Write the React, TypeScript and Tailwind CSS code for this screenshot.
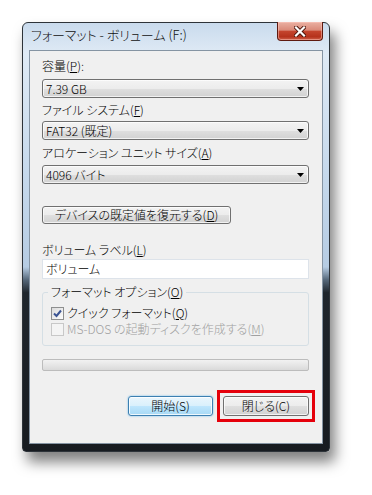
const jp = "font-['Noto_Sans_CJK_JP',sans-serif] font-light [font-feature-settings:'palt']"

function Select({ value }: { value: string }) {
  return (
    <div className="flex h-[19px] items-center justify-between rounded-[3px] border border-[#707070] bg-[linear-gradient(to_bottom,#f3f3f3_0%,#ececec_50%,#dfdfdf_51%,#d2d2d2_100%)] pl-[3px] pr-[4px] text-[12px] leading-none text-black shadow-[inset_0_0_0_1px_rgba(255,255,255,0.7)]">
      <span>{value}</span>
      <svg width="7" height="4" viewBox="0 0 7 4">
        <path d="M0 0h7L3.5 4z" fill="#000" />
      </svg>
    </div>
  )
}

function Label({ text, k, h }: { text: string; k: string; h: string }) {
  return (
    <div className={`flex items-center text-[12px] leading-none text-black ${h}`}>
      {text}(<u>{k}</u>)
    </div>
  )
}

export default function App() {
  return (
    <div className={`h-[495px] w-[372px] bg-white pl-[22px] pt-[22px] ${jp}`}>
      {/* window */}
      <div className="flex h-[430px] w-[308px] flex-col rounded-t-[6px] rounded-b-[4px] border border-[#2d3339] bg-[linear-gradient(to_bottom,#c9dbed_0%,#dfeaf5_7%,#c6d9ec_35%,#b6cce3_57%,#56687a_60%,#1f262d_63%,#171b20_100%)] px-[6px] pb-[7px] shadow-[5px_10px_14px_rgba(0,0,0,0.5)]">
        {/* title bar */}
        <div className="flex h-[27px] items-start justify-between">
          <span className="pl-[2px] pt-[4px] text-[13px] leading-[16px] text-[#111]">
            フォーマット - ボリューム (F:)
          </span>
          <div className="-mt-[1px] flex h-[19px] w-[46px] items-center justify-center rounded-b-[4px] border border-t-0 border-[#5e1a10] bg-[linear-gradient(to_bottom,#eab0a2_0%,#da8a79_45%,#c4442d_52%,#b5321c_82%,#cf624c_100%)] shadow-[inset_0_0_0_1px_rgba(255,200,190,0.5)]">
            <svg width="12" height="11" viewBox="0 0 12 11">
              <path d="M2 1.5l8 8M10 1.5l-8 8" stroke="#4a1208" strokeWidth="4" strokeLinecap="square" />
              <path d="M2 1.5l8 8M10 1.5l-8 8" stroke="#fff" strokeWidth="2.2" strokeLinecap="square" />
            </svg>
          </div>
        </div>

        {/* client area */}
        <div className="flex flex-1 flex-col border border-[#8594a3] bg-[#f0f0f0] pl-[12px] pr-[13px] pt-[2px]">
          <div className="flex h-[26px] items-center text-[12px] leading-none text-black">
            容量(<u>P</u>):
          </div>
          <Select value="7.39 GB" />
          <Label text="ファイル システム" k="F" h="h-[23px]" />
          <Select value="FAT32 (既定)" />
          <Label text="アロケーション ユニット サイズ" k="A" h="h-[25px]" />
          <Select value="4096 バイト" />

          <div className="mt-[22px] flex h-[18px] w-[189px] items-center justify-center rounded-[3px] border border-[#707070] bg-[linear-gradient(to_bottom,#f3f3f3_0%,#ececec_50%,#dfdfdf_51%,#d2d2d2_100%)] text-[12px] leading-none text-black shadow-[inset_0_0_0_1px_rgba(255,255,255,0.7)]">
            デバイスの既定値を復元する(<u>D</u>)
          </div>

          <div className="mt-[16px] flex h-[19px] items-center text-[12px] leading-none text-black">
            ボリューム ラベル(<u>L</u>)
          </div>
          <div className="flex h-[20px] items-center border border-[#dde3ea] bg-white pl-[3px] text-[12px] leading-none text-black">
            ボリューム
          </div>

          <fieldset className="mt-[6px] rounded-[3px] border border-[#d5dfe5] pb-[8px]">
            <legend className="ml-[5px] px-[3px] text-[12px] leading-[14px] text-black">
              フォーマット オプション(<u>O</u>)
            </legend>
            <div className="pl-[8px]">
              <div className="mt-[6px] flex h-[16px] items-center gap-[3px] text-[12px] leading-none text-black">
                <div className="flex h-[13px] w-[13px] items-center justify-center border border-[#8e8f8f] bg-[linear-gradient(135deg,#dcdcdc_0%,#fdfdfd_100%)]">
                  <svg width="9" height="9" viewBox="0 0 9 9">
                    <path d="M1 4.5l2.5 2.5L8 1.5" stroke="#3b5493" strokeWidth="2" fill="none" />
                  </svg>
                </div>
                <span>
                  クイック フォーマット(<u>Q</u>)
                </span>
              </div>
              <div className="flex h-[16px] items-center gap-[3px] text-[12px] leading-none text-[#a0a0a0]">
                <div className="h-[13px] w-[13px] border border-[#c8c8c8] bg-[#f4f4f4]" />
                <span>
                  MS-DOS の起動ディスクを作成する(<u>M</u>)
                </span>
              </div>
            </div>
          </fieldset>

          <div className="mt-[13px] h-[12px] rounded-[2px] border border-[#bcbcbc] bg-[linear-gradient(to_bottom,#f2f2f2_0%,#e6e6e6_50%,#dadada_100%)]" />

          <div className="mt-[25px] flex items-start justify-end gap-[10px]">
            <div className="flex h-[20px] w-[85px] items-center justify-center rounded-[3px] border border-[#3c7fb1] bg-[linear-gradient(to_bottom,#eaf6fd_0%,#d9f0fc_50%,#bee6fd_51%,#a7d9f5_100%)] text-[12px] leading-none text-black shadow-[inset_0_0_0_1px_rgba(255,255,255,0.8),0_0_2px_#5fb6ec]">
              開始(S)
            </div>
            <div className="-m-[6px] border-[3px] border-[#e5000b] p-[3px]">
              <div className="flex h-[20px] w-[86px] items-center justify-center rounded-[3px] border border-[#707070] bg-[linear-gradient(to_bottom,#f3f3f3_0%,#ececec_50%,#dfdfdf_51%,#d2d2d2_100%)] text-[12px] leading-none text-black shadow-[inset_0_0_0_1px_rgba(255,255,255,0.7)]">
                閉じる(C)
              </div>
            </div>
          </div>
        </div>
      </div>
    </div>
  )
}
